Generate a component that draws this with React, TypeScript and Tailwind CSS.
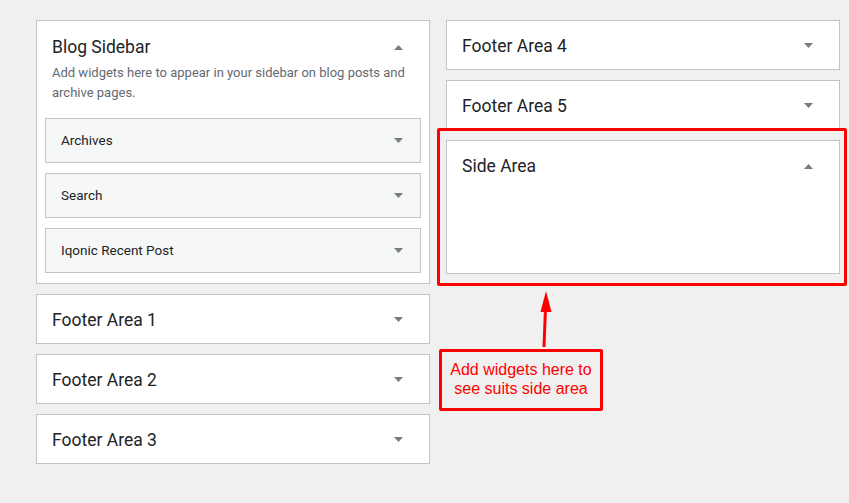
import React from 'react';

const Caret = ({ up = false }: { up?: boolean }) => (
  <svg width="9" height="5" viewBox="0 0 9 5" className="shrink-0">
    {up ? (
      <polygon points="0,5 9,5 4.5,0" fill="#787c82" />
    ) : (
      <polygon points="0,0 9,0 4.5,5" fill="#787c82" />
    )}
  </svg>
);

function ClosedArea({ title }: { title: string }) {
  return (
    <div className="h-[50px] border border-[#c3c4c7] bg-white flex items-center justify-between pl-[15px] pr-[26px]">
      <h2 className="mt-[2px] text-[17.5px] text-[#1d2327]">{title}</h2>
      <Caret />
    </div>
  );
}

function Widget({ title }: { title: string }) {
  return (
    <div className="h-[45px] border border-[#c3c4c7] bg-[#f6f7f7] flex items-center justify-between pl-[15px] pr-[17px]">
      <h3 className="text-[13.5px] text-[#1d2327]">{title}</h3>
      <Caret />
    </div>
  );
}

export default function App() {
  return (
    <div
      className="relative min-h-screen bg-[#f0f0f1]"
      style={{ fontFamily: 'Roboto, "Liberation Sans", Arial, sans-serif' }}
    >
      <div className="flex gap-4 pl-9 pt-5">
        {/* left column */}
        <div className="w-[394px] flex flex-col gap-[10px]">
          <div className="border border-[#c3c4c7] bg-white pb-[10px]">
            <div className="flex items-center justify-between pl-[15px] pr-[26px] pt-[14px]">
              <h2 className="text-[17.5px] leading-6 text-[#1d2327]">Blog Sidebar</h2>
              <Caret up />
            </div>
            <p className="mt-[4px] px-[15px] text-[13px] leading-5 text-[#646970]">
              Add widgets here to appear in your sidebar on blog posts and archive pages.
            </p>
            <div className="mt-[15px] mx-2 flex flex-col gap-[10px]">
              <Widget title="Archives" />
              <Widget title="Search" />
              <Widget title="Iqonic Recent Post" />
            </div>
          </div>
          <ClosedArea title="Footer Area 1" />
          <ClosedArea title="Footer Area 2" />
          <ClosedArea title="Footer Area 3" />
        </div>

        {/* right column */}
        <div className="w-[394px] flex flex-col gap-[10px]">
          <ClosedArea title="Footer Area 4" />
          <ClosedArea title="Footer Area 5" />
          <div className="h-[134px] border border-[#c3c4c7] bg-white">
            <div className="flex items-center justify-between pl-[15px] pr-[26px] pt-[13px]">
              <h2 className="text-[17.5px] leading-6 text-[#1d2327]">Side Area</h2>
              <Caret up />
            </div>
          </div>
        </div>
      </div>

      {/* annotation */}
      <div className="absolute left-[437px] top-[128px] w-[410px] h-[158px] border-[3px] border-[#ff0000] rounded-[2px]" />
      <svg className="absolute left-[530px] top-[285px]" width="30" height="70" viewBox="530 285 30 70">
        <line x1="544" y1="347" x2="545.5" y2="308" stroke="#ff0000" strokeWidth="3" />
        <polygon points="546,291 540.5,312 551.5,312" fill="#ff0000" />
      </svg>
      <div
        className="absolute left-[439px] top-[349px] w-[164px] h-[62px] border-[3px] border-[#ff0000] rounded-[2px] flex items-center justify-center text-center text-[16px] leading-[19px] text-[#ff0000]"
        style={{ fontFamily: '"Liberation Sans", Arial, sans-serif' }}
      >
        <span className="-mt-[2px]">
          Add widgets here to
          <br />
          see suits side area
        </span>
      </div>
    </div>
  );
}
